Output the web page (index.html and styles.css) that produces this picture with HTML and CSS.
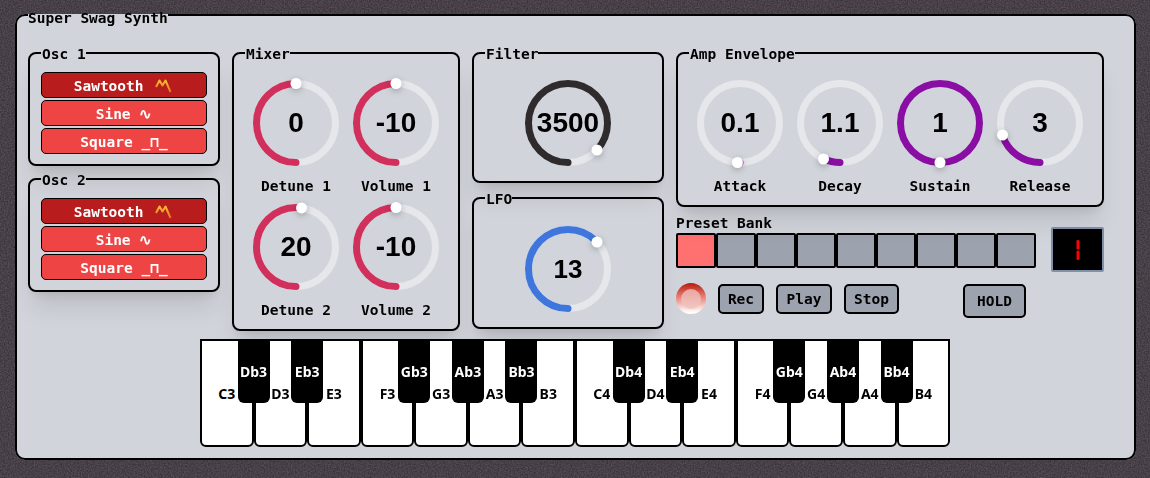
FILE: index.html
```html
<!DOCTYPE html>
<html lang="en">
<head>
    <meta charset="UTF-8">
    <meta name="viewport" content="width=device-width, initial-scale=1.0">
    <title>Super Swag Synth</title>
    <link rel="stylesheet" href="styles.css">
</head>
<body>
    <svg class="noise-defs" width="0" height="0">
        <filter id="grain" color-interpolation-filters="sRGB"><feTurbulence type="fractalNoise" baseFrequency="0.7" numOctaves="2" seed="4"/><feColorMatrix values="0 0 0 0 0.2  0 0 0 0 0.17  0 0 0 0 0.2  1.6 0 0 0 -0.45"/></filter>
        <linearGradient id="sawfill" x1="0" y1="0" x2="0" y2="1"><stop offset="0" stop-color="#f7c02e"/><stop offset="1" stop-color="#e8702c"/></linearGradient>
    </svg>
    <svg class="noise" width="1150" height="478"><rect width="1150" height="478" filter="url(#grain)"/></svg>

    <fieldset class="synth">
        <legend>Super Swag Synth</legend>

        <div class="top">
            <div class="col osc-col">
                <fieldset class="box osc">
                    <legend>Osc 1</legend>
                    <button class="wave active">Sawtooth <svg class="saw" width="17" height="14" viewBox="0 0 17 14"><path d="M1 8 4.5 1.5 7.5 6.5 10.5 1.5 15.5 13"/></svg></button>
                    <button class="wave">Sine ∿</button>
                    <button class="wave">Square _⊓_</button>
                </fieldset>
                <fieldset class="box osc">
                    <legend>Osc 2</legend>
                    <button class="wave active">Sawtooth <svg class="saw" width="17" height="14" viewBox="0 0 17 14"><path d="M1 8 4.5 1.5 7.5 6.5 10.5 1.5 15.5 13"/></svg></button>
                    <button class="wave">Sine ∿</button>
                    <button class="wave">Square _⊓_</button>
                </fieldset>
            </div>

            <fieldset class="box mixer">
                <legend>Mixer</legend>
                <div class="knob-grid">
                    <div class="knob-wrap">
                        <div class="knob">
                            <svg width="86" height="86" viewBox="0 0 86 86">
                                <circle class="track" cx="43" cy="43" r="39.5"/>
                                <circle class="arc" cx="43" cy="43" r="39.5" stroke="#d1305c" pathLength="1000" stroke-dasharray="500 1000" transform="rotate(90 43 43)"/>
                                <circle class="handle" cx="43" cy="3.5" r="5.5"/>
                            </svg>
                            <span class="value">0</span>
                        </div>
                        <label>Detune 1</label>
                    </div>
                    <div class="knob-wrap">
                        <div class="knob">
                            <svg width="86" height="86" viewBox="0 0 86 86">
                                <circle class="track" cx="43" cy="43" r="39.5"/>
                                <circle class="arc" cx="43" cy="43" r="39.5" stroke="#d1305c" pathLength="1000" stroke-dasharray="500 1000" transform="rotate(90 43 43)"/>
                                <circle class="handle" cx="43" cy="3.5" r="5.5"/>
                            </svg>
                            <span class="value">-10</span>
                        </div>
                        <label>Volume 1</label>
                    </div>
                    <div class="knob-wrap">
                        <div class="knob">
                            <svg width="86" height="86" viewBox="0 0 86 86">
                                <circle class="track" cx="43" cy="43" r="39.5"/>
                                <circle class="arc" cx="43" cy="43" r="39.5" stroke="#d1305c" pathLength="1000" stroke-dasharray="522 1000" transform="rotate(90 43 43)"/>
                                <circle class="handle" cx="48.5" cy="3.9" r="5.5"/>
                            </svg>
                            <span class="value">20</span>
                        </div>
                        <label>Detune 2</label>
                    </div>
                    <div class="knob-wrap">
                        <div class="knob">
                            <svg width="86" height="86" viewBox="0 0 86 86">
                                <circle class="track" cx="43" cy="43" r="39.5"/>
                                <circle class="arc" cx="43" cy="43" r="39.5" stroke="#d1305c" pathLength="1000" stroke-dasharray="500 1000" transform="rotate(90 43 43)"/>
                                <circle class="handle" cx="43" cy="3.5" r="5.5"/>
                            </svg>
                            <span class="value">-10</span>
                        </div>
                        <label>Volume 2</label>
                    </div>
                </div>
            </fieldset>

            <div class="col filter-col">
                <fieldset class="box filter">
                    <legend>Filter</legend>
                    <div class="knob">
                        <svg width="86" height="86" viewBox="0 0 86 86">
                            <circle class="track" cx="43" cy="43" r="39.5"/>
                            <circle class="arc" cx="43" cy="43" r="39.5" stroke="#2f2a2c" pathLength="1000" stroke-dasharray="870 1000" transform="rotate(90 43 43)"/>
                            <circle class="handle" cx="72" cy="70" r="5.5"/>
                        </svg>
                        <span class="value">3500</span>
                    </div>
                </fieldset>
                <fieldset class="box lfo">
                    <legend>LFO</legend>
                    <div class="knob">
                        <svg width="86" height="86" viewBox="0 0 86 86">
                            <circle class="track" cx="43" cy="43" r="39.5"/>
                            <circle class="arc" cx="43" cy="43" r="39.5" stroke="#3f76dd" pathLength="1000" stroke-dasharray="625 1000" transform="rotate(90 43 43)"/>
                            <circle class="handle" cx="72" cy="16" r="5.5"/>
                        </svg>
                        <span class="value small">13</span>
                    </div>
                </fieldset>
            </div>

            <div class="col right-col">
                <fieldset class="box amp">
                    <legend>Amp Envelope</legend>
                    <div class="amp-row">
                        <div class="knob-wrap">
                            <div class="knob">
                                <svg width="86" height="86" viewBox="0 0 86 86">
                                    <circle class="track" cx="43" cy="43" r="39.5"/>
                                    <circle class="arc" cx="43" cy="43" r="39.5" stroke="#8a0ea3" pathLength="1000" stroke-dasharray="10 1000" transform="rotate(90 43 43)"/>
                                    <circle class="handle" cx="40.5" cy="82.5" r="5.5"/>
                                </svg>
                                <span class="value">0.1</span>
                            </div>
                            <label>Attack</label>
                        </div>
                        <div class="knob-wrap">
                            <div class="knob">
                                <svg width="86" height="86" viewBox="0 0 86 86">
                                    <circle class="track" cx="43" cy="43" r="39.5"/>
                                    <circle class="arc" cx="43" cy="43" r="39.5" stroke="#8a0ea3" pathLength="1000" stroke-dasharray="70 1000" transform="rotate(90 43 43)"/>
                                    <circle class="handle" cx="26.5" cy="79" r="5.5"/>
                                </svg>
                                <span class="value">1.1</span>
                            </div>
                            <label>Decay</label>
                        </div>
                        <div class="knob-wrap">
                            <div class="knob">
                                <svg width="86" height="86" viewBox="0 0 86 86">
                                    <circle class="track" cx="43" cy="43" r="39.5"/>
                                    <circle class="arc" cx="43" cy="43" r="39.5" stroke="#8a0ea3" pathLength="1000" stroke-dasharray="1000 1000" transform="rotate(90 43 43)"/>
                                    <circle class="handle" cx="43" cy="82.5" r="5.5"/>
                                </svg>
                                <span class="value">1</span>
                            </div>
                            <label>Sustain</label>
                        </div>
                        <div class="knob-wrap">
                            <div class="knob">
                                <svg width="86" height="86" viewBox="0 0 86 86">
                                    <circle class="track" cx="43" cy="43" r="39.5"/>
                                    <circle class="arc" cx="43" cy="43" r="39.5" stroke="#8a0ea3" pathLength="1000" stroke-dasharray="197 1000" transform="rotate(90 43 43)"/>
                                    <circle class="handle" cx="5.5" cy="55" r="5.5"/>
                                </svg>
                                <span class="value">3</span>
                            </div>
                            <label>Release</label>
                        </div>
                    </div>
                </fieldset>

                <div class="bank-row">
                    <div class="bank">
                        <div class="bank-title">Preset Bank</div>
                        <div class="pads">
                            <div class="pad on"></div>
                            <div class="pad"></div>
                            <div class="pad"></div>
                            <div class="pad"></div>
                            <div class="pad"></div>
                            <div class="pad"></div>
                            <div class="pad"></div>
                            <div class="pad"></div>
                            <div class="pad"></div>
                        </div>
                    </div>
                    <div class="display"><svg width="4" height="20" viewBox="0 0 4 20"><rect x="0.5" width="3" height="9.5" rx="1.2"/><rect x="0.5" y="10.5" width="3" height="9.5" rx="1.2"/></svg></div>
                </div>

                <div class="transport">
                    <div class="led"></div>
                    <button class="tbtn rec">Rec</button>
                    <button class="tbtn play">Play</button>
                    <button class="tbtn stop">Stop</button>
                    <button class="tbtn hold">HOLD</button>
                </div>
            </div>
        </div>

        <div class="keyboard">
            <div class="key">C3<div class="black">Db3</div></div>
            <div class="key">D3<div class="black">Eb3</div></div>
            <div class="key">E3</div>
            <div class="key">F3<div class="black">Gb3</div></div>
            <div class="key">G3<div class="black">Ab3</div></div>
            <div class="key">A3<div class="black">Bb3</div></div>
            <div class="key">B3</div>
            <div class="key">C4<div class="black">Db4</div></div>
            <div class="key">D4<div class="black">Eb4</div></div>
            <div class="key">E4</div>
            <div class="key">F4<div class="black">Gb4</div></div>
            <div class="key">G4<div class="black">Ab4</div></div>
            <div class="key">A4<div class="black">Bb4</div></div>
            <div class="key">B4</div>
        </div>
    </fieldset>
</body>
</html>
```

FILE: styles.css
```css
* {
    box-sizing: border-box;
}
html, body {
    height: 100%;
}
body {
    margin: 0;
    padding: 4px 14px 0 15px;
    background-color: #544c54;
    font-family: "DejaVu Sans Mono", monospace;
    font-weight: bold;
    color: #000;
    overflow: hidden;
}
.noise-defs {
    position: absolute;
}
.noise {
    position: fixed;
    top: 0;
    left: 0;
    z-index: -1;
}
fieldset {
    margin: 0;
    min-width: 0;
}
legend {
    padding: 7px 0 0;
    font-size: 14.5px;
    line-height: 15px;
}
.synth {
    height: 456px;
    padding: 0 11px;
    background-color: #d1d5db;
    border: 2px solid #000;
    border-radius: 10px;
}
.top {
    display: flex;
    gap: 12px;
    margin-top: 18px;
}
.col {
    display: flex;
    flex-direction: column;
}
.box {
    position: relative;
    padding: 0 11px;
    border: 2px solid #000;
    border-radius: 8px;
    box-shadow: 0 20px 25px -5px rgba(0, 0, 0, 0.1), 0 8px 10px -6px rgba(0, 0, 0, 0.1);
}
.box legend {
    padding: 3px 0 0 1px;
}
.osc-col {
    gap: 4px;
    width: 192px;
}
.osc {
    display: flex;
    flex-direction: column;
    gap: 2px;
    height: 122px;
    padding-top: 10px;
}
.wave {
    height: 26px;
    padding: 2px 0 0;
    font: bold 14.5px "DejaVu Sans Mono", monospace;
    color: #fff;
    background-color: #ef4444;
    border: 1px solid #000;
    border-radius: 5px;
}
.wave.active {
    background-color: #b91c1c;
}
.saw {
    margin: 0 2px 0 3px;
    vertical-align: -2px;
}
.saw path {
    fill: none;
    stroke: url(#sawfill);
    stroke-width: 2;
    stroke-linejoin: round;
}
.mixer {
    width: 228px;
    height: 287px;
}
.knob-grid {
    display: grid;
    grid-template-columns: 86px 86px;
    column-gap: 14px;
    row-gap: 10px;
    padding: 18px 8px 0;
}
.knob-wrap {
    display: flex;
    flex-direction: column;
    align-items: center;
}
.knob-wrap label {
    margin-top: 13px;
    font-size: 14.5px;
    line-height: 15px;
}
.knob {
    position: relative;
    width: 86px;
    height: 86px;
}
.knob svg {
    display: block;
    overflow: visible;
}
.track {
    fill: none;
    stroke: #e5e7eb;
    stroke-width: 7;
}
.arc {
    fill: none;
    stroke-width: 7;
    stroke-linecap: round;
}
.handle {
    fill: #fff;
    filter: drop-shadow(0 2px 3px rgba(0, 0, 0, 0.25));
}
.value {
    position: absolute;
    inset: 0;
    display: flex;
    align-items: center;
    justify-content: center;
    font-family: "Liberation Sans", Arial, sans-serif;
    font-size: 28px;
}
.value.small {
    font-size: 26px;
}
.filter-col {
    gap: 6px;
    width: 192px;
}
.filter, .lfo {
    display: flex;
    justify-content: center;
    padding-top: 18px;
}
.filter {
    height: 139px;
}
.lfo {
    height: 140px;
    padding-top: 19px;
}
.right-col {
    width: 428px;
}
.amp {
    height: 163px;
}
.amp-row {
    display: flex;
    gap: 14px;
    padding: 18px 8px 0;
}
.bank-row {
    display: flex;
    gap: 15px;
    margin-top: 9px;
}
.bank-title {
    margin-bottom: 2px;
    font-size: 14.5px;
    line-height: 15px;
}
.pads {
    display: flex;
}
.pad {
    width: 40px;
    height: 35px;
    background-color: #9ca3af;
    border: 2px solid #000;
    border-radius: 2px;
}
.pad.on {
    background-color: #ff7070;
}
.display {
    display: flex;
    align-items: center;
    justify-content: center;
    width: 55px;
    height: 45px;
    margin-top: 11px;
    background-color: #000;
    border: 2px solid #8090a8;
    border-radius: 2px;
}
.display rect {
    fill: #f00;
}
.transport {
    display: flex;
    align-items: flex-start;
    margin-top: 12px;
}
.led {
    display: flex;
    align-items: center;
    justify-content: center;
    width: 30px;
    height: 31px;
    margin: -1px 12px 0 0;
    border-radius: 50%;
    background: linear-gradient(180deg, #b81c0c, #e88078 45%, #fff 95%);
}
.led::before {
    content: "";
    width: 20px;
    height: 20px;
    border-radius: 50%;
    background: linear-gradient(180deg, #e8a6a0, #f2c8c2);
    filter: blur(0.7px);
}
.tbtn {
    height: 30px;
    padding: 0;
    font: bold 14.5px "DejaVu Sans Mono", monospace;
    color: #000;
    background-color: #9ca3af;
    border: 2px solid #000;
    border-radius: 5px;
}
.rec {
    width: 46px;
}
.play {
    width: 56px;
    margin-left: 12px;
}
.stop {
    width: 55px;
    margin-left: 12px;
}
.hold {
    width: 63px;
    height: 34px;
    margin-left: 64px;
}
.keyboard {
    display: flex;
    width: 750px;
    height: 108px;
    margin: 8px 0 0 172px;
    font-family: "Noto Sans", sans-serif;
    font-size: 14px;
}
.key {
    position: relative;
    flex: 1;
    display: flex;
    align-items: center;
    justify-content: center;
    background-color: #fff;
    border: 2px solid #000;
    border-radius: 0 0 6px 6px;
}
.black {
    position: absolute;
    top: -2px;
    right: -18px;
    z-index: 1;
    display: flex;
    align-items: center;
    justify-content: center;
    width: 32px;
    height: 64px;
    color: #fff;
    background-color: #000;
    border-radius: 0 0 6px 6px;
}
```
